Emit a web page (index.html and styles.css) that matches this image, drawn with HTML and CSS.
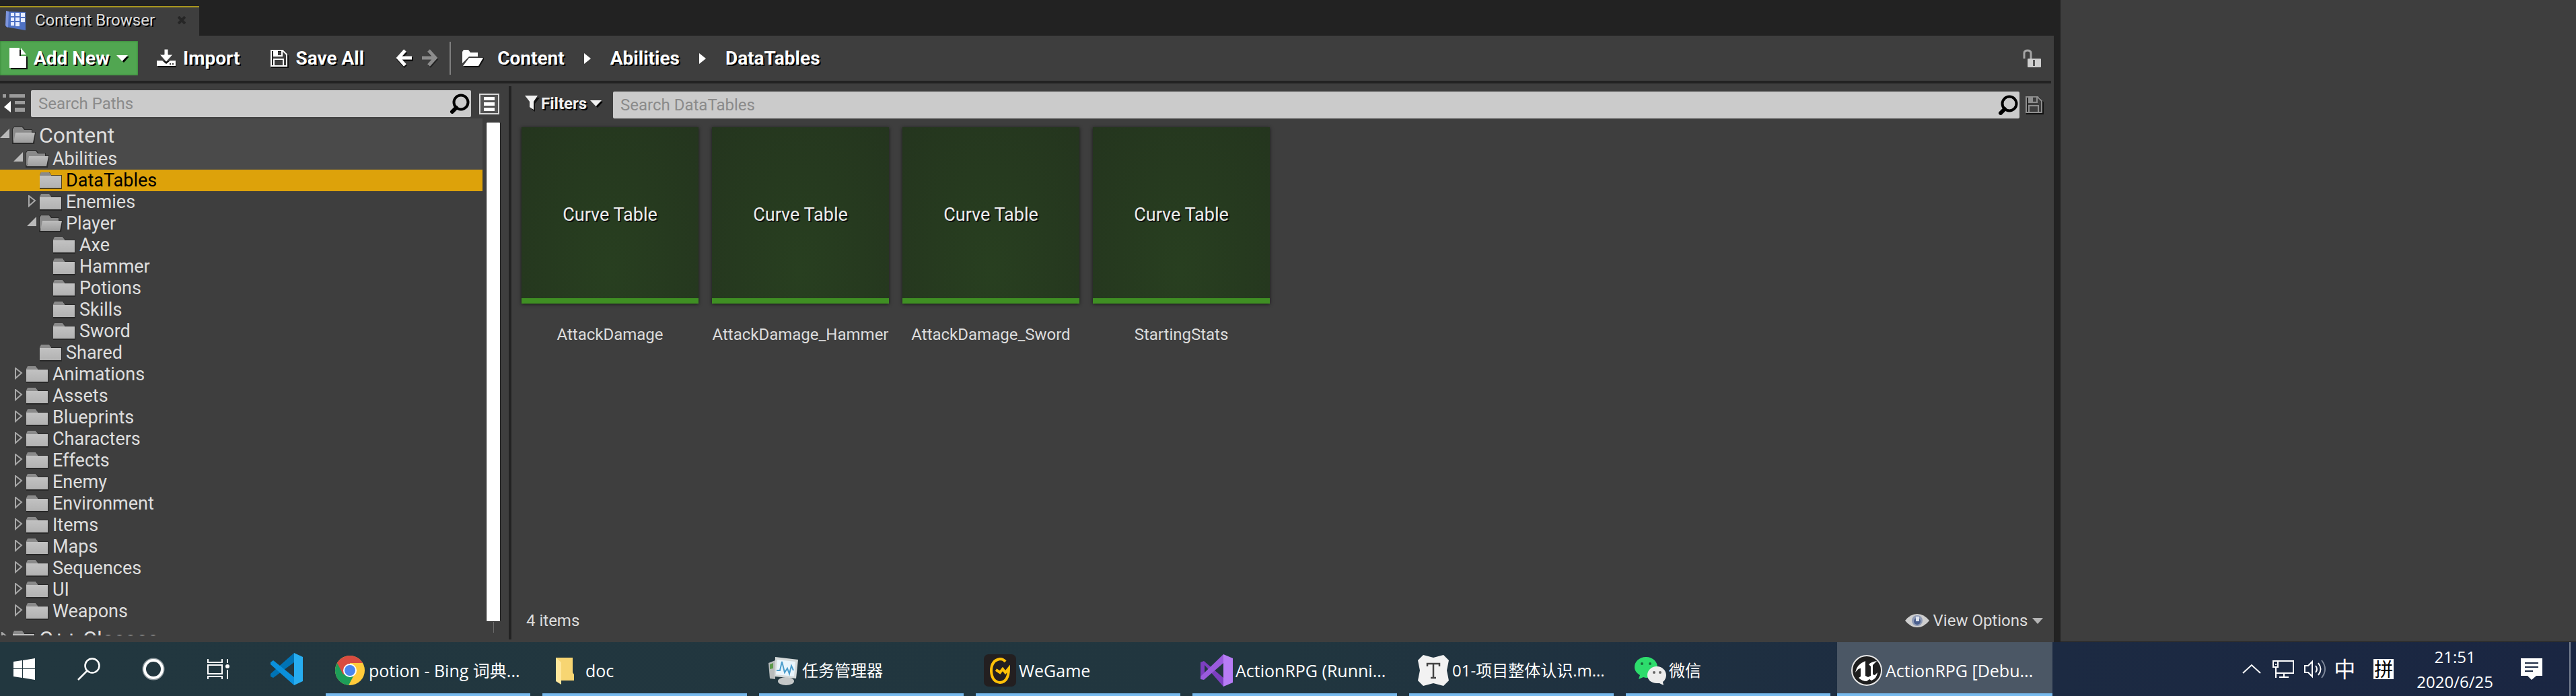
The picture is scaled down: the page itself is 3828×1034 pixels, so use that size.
FILE: index.html
```html
<!DOCTYPE html>
<html lang="en">
<head>
<meta charset="utf-8">
<title>Content Browser</title>
<link rel="stylesheet" href="styles.css">
</head>
<body>
<svg class="defs" aria-hidden="true">
  <defs>
    <linearGradient id="g-folder" x1="0" y1="0" x2="0" y2="1"><stop offset="0" stop-color="#c2c2c2"/><stop offset="1" stop-color="#b2b2b2"/></linearGradient>
    <linearGradient id="g-open" x1="0" y1="0" x2="0" y2="1"><stop offset="0" stop-color="#bdbdbd"/><stop offset="1" stop-color="#9d9d9d"/></linearGradient>
  </defs>
  <symbol id="folder" viewBox="0 0 36 28"><path d="M1 27V6l2-4h13l2 4h16v21z" fill="#222" opacity=".75"/><path d="M1 6l2-4h12l3 4v3H1z" fill="#8a8a8a"/><path d="M1 7h32v18H1z" fill="url(#g-folder)"/></symbol>
  <symbol id="folder-open" viewBox="0 0 36 28"><path d="M0 27V4l3-3h13l3 4h11v4h5l-2 18z" fill="#222" opacity=".75"/><path d="M1 25V5l2-3h12l3 4h11v4H8z" fill="#8a8a8a"/><path d="M5 10h29l-3 15H2z" fill="url(#g-open)"/></symbol>
  <symbol id="tri-open" viewBox="0 0 18 20"><path d="M0 14L14 0v14z" fill="#b9b9b9"/></symbol>
  <symbol id="tri-closed" viewBox="0 0 18 20"><path d="M3 1v15l9-8z" fill="none" stroke="#a8a8a8" stroke-width="2"/></symbol>
  <symbol id="glass" viewBox="0 0 30 30"><circle cx="17" cy="13" r="10.500" fill="none" stroke="#000" stroke-width="4"/><path d="M10 21l-6 6" stroke="#000" stroke-width="6" stroke-linecap="round"/></symbol>
  <symbol id="caret" viewBox="0 0 20 12"><path d="M3 3h17l-8 9z" fill="#000"/><path d="M1 1h17l-8.500 9z" fill="currentColor"/></symbol>
  <symbol id="floppy" viewBox="0 0 28 28"><path d="M3 3h18l6 7v17H3z" fill="none" stroke="#111" stroke-width="2"/><path d="M2 2h17l6 6v17H2zM6 2v8h12V2M6 25V15h14v10" fill="none" stroke="currentColor" stroke-width="2"/><path d="M7 3h5v6H7z" fill="currentColor"/></symbol>
  <symbol id="crumb" viewBox="0 0 12 18"><path d="M1 1l10 8-10 8z" fill="#fff"/></symbol>
</svg>

<div class="desktop">
  <main class="window">
    <div class="titlebar">
      <div class="tab">
        <svg class="tab-icon" viewBox="0 0 32 30"><path d="M2 2l28 1v27L1 25z" fill="#4f72c4"/><path d="M1 1l4 1-1 24-4-3z" fill="#7d95dc"/><path d="M8 4h5v5H8zM15 4h6v5h-6zM23 4h6v6h-6zM8 11h5v5H8zM15 11h6v5h-6zM23 12h6v6h-6zM8 18h5v5H8zM15 18h6v6h-6z" fill="#e6ecff"/></svg>
        <span class="tab-name">Content Browser</span>
        <button class="tab-close" aria-label="Close tab"><svg viewBox="0 0 12 12"><path d="M1 1l10 10M11 1L1 11" stroke="#262626" stroke-width="4"/></svg></button>
      </div>
    </div>

    <div class="toolbar">
      <button class="add-new">
        <svg width="28" height="32" viewBox="0 0 28 32"><path d="M3 3h15v10h10v19H3z" fill="#111"/><path d="M1 0h15v12h10v18H1z" fill="#fff"/><path d="M18 0l8 10h-8z" fill="#fff"/></svg>
        <span>Add New</span>
        <svg width="20" height="12"><use href="#caret"/></svg>
      </button>
      <button class="tool import">
        <svg width="29" height="27" viewBox="0 0 29 27"><path d="M2 18h27v9H2z" fill="#111"/><path d="M0 17h8l6 5 6-5h8v8H0z" fill="#fff"/><path d="M11 0h6v8h7L14 19 4 8h7z" fill="#fff" stroke="#3e3e3e" stroke-width="1"/><path d="M19 21h2v2h-2zM23 21h2v2h-2z" fill="#333"/></svg>
        <span>Import</span>
      </button>
      <button class="tool save-all"><svg width="28" height="28"><use href="#floppy"/></svg><span>Save All</span></button>
      <div class="history">
        <button aria-label="Back"><svg width="26" height="28" viewBox="0 0 26 28"><path d="M15 4L5 15l10 11M7 15h19" fill="none" stroke="#111" stroke-width="6"/><path d="M14 2L4 13l10 11M5 13h19" fill="none" stroke="#fff" stroke-width="5"/></svg></button>
        <button aria-label="Forward" disabled><svg width="26" height="28" viewBox="0 0 26 28"><path d="M12 4l10 11-10 11" fill="none" stroke="#222" stroke-width="5"/><path d="M11 2l10 11-10 11M1 13h19" fill="none" stroke="#8c8c8c" stroke-width="5"/></svg></button>
      </div>
      <span class="divider"></span>
      <nav class="crumbs" aria-label="Path">
        <svg class="crumb-folder" width="32" height="26" viewBox="0 0 32 26"><path d="M3 25h21l8-13" fill="none" stroke="#111" stroke-width="3"/><path d="M0 20V3l2-3h7l3 4h11v6H10z" fill="#fff"/><path d="M10 12h21l-7 12H1z" fill="#fff"/></svg>
        <a href="#content">Content</a>
        <svg width="12" height="18"><use href="#crumb"/></svg>
        <a href="#abilities">Abilities</a>
        <svg width="12" height="18"><use href="#crumb"/></svg>
        <a href="#datatables">DataTables</a>
      </nav>
      <button class="lock" aria-label="Lock"><svg width="28" height="28" viewBox="0 0 28 28"><path d="M2 14V6q0-4 5-4t5 4v9" fill="none" stroke="#a4a4a4" stroke-width="3"/><rect x="7" y="14" width="20" height="13" rx="1" fill="#cfcfcf"/><path d="M15 16h3v9h-3z" fill="#555"/></svg></button>
    </div>

    <div class="panes">
      <aside class="sources">
        <div class="sources-head">
          <button class="icon-btn" aria-label="Hide sources"><svg width="34" height="30" viewBox="0 0 34 30"><path d="M0 1h5v5H0zM10 1h23v5H10zM18 11h15v5H18zM18 21h15v6H18z" fill="#9b9b9b"/><path d="M12 11v17L2 20z" fill="#fff"/></svg></button>
          <label class="search"><input type="text" placeholder="Search Paths" aria-label="Search Paths"><svg width="30" height="30"><use href="#glass"/></svg></label>
          <button class="icon-btn" aria-label="Collections"><svg width="30" height="31" viewBox="0 0 30 31"><path d="M1 1h28v29H1z" fill="#555" stroke="#d8d8d8" stroke-width="2"/><path d="M7 5h16v5H7zM7 13h16v5H7zM7 21h16v5H7z" fill="#fff"/></svg></button>
        </div>
        <div class="tree-wrap">
          <ul class="tree">
            <li><button class="row root parent"><svg class="tw"><use href="#tri-open"/></svg><svg class="fd"><use href="#folder-open"/></svg>Content</button></li>
            <li><button class="row l1 parent"><svg class="tw"><use href="#tri-open"/></svg><svg class="fd"><use href="#folder-open"/></svg>Abilities</button></li>
            <li><button class="row l2 selected"><svg class="tw"></svg><svg class="fd"><use href="#folder"/></svg>DataTables</button></li>
            <li><button class="row l2"><svg class="tw"><use href="#tri-closed"/></svg><svg class="fd"><use href="#folder"/></svg>Enemies</button></li>
            <li><button class="row l2"><svg class="tw"><use href="#tri-open"/></svg><svg class="fd"><use href="#folder-open"/></svg>Player</button></li>
            <li><button class="row l3"><svg class="tw"></svg><svg class="fd"><use href="#folder"/></svg>Axe</button></li>
            <li><button class="row l3"><svg class="tw"></svg><svg class="fd"><use href="#folder"/></svg>Hammer</button></li>
            <li><button class="row l3"><svg class="tw"></svg><svg class="fd"><use href="#folder"/></svg>Potions</button></li>
            <li><button class="row l3"><svg class="tw"></svg><svg class="fd"><use href="#folder"/></svg>Skills</button></li>
            <li><button class="row l3"><svg class="tw"></svg><svg class="fd"><use href="#folder"/></svg>Sword</button></li>
            <li><button class="row l2"><svg class="tw"></svg><svg class="fd"><use href="#folder"/></svg>Shared</button></li>
            <li><button class="row l1"><svg class="tw"><use href="#tri-closed"/></svg><svg class="fd"><use href="#folder"/></svg>Animations</button></li>
            <li><button class="row l1"><svg class="tw"><use href="#tri-closed"/></svg><svg class="fd"><use href="#folder"/></svg>Assets</button></li>
            <li><button class="row l1"><svg class="tw"><use href="#tri-closed"/></svg><svg class="fd"><use href="#folder"/></svg>Blueprints</button></li>
            <li><button class="row l1"><svg class="tw"><use href="#tri-closed"/></svg><svg class="fd"><use href="#folder"/></svg>Characters</button></li>
            <li><button class="row l1"><svg class="tw"><use href="#tri-closed"/></svg><svg class="fd"><use href="#folder"/></svg>Effects</button></li>
            <li><button class="row l1"><svg class="tw"><use href="#tri-closed"/></svg><svg class="fd"><use href="#folder"/></svg>Enemy</button></li>
            <li><button class="row l1"><svg class="tw"><use href="#tri-closed"/></svg><svg class="fd"><use href="#folder"/></svg>Environment</button></li>
            <li><button class="row l1"><svg class="tw"><use href="#tri-closed"/></svg><svg class="fd"><use href="#folder"/></svg>Items</button></li>
            <li><button class="row l1"><svg class="tw"><use href="#tri-closed"/></svg><svg class="fd"><use href="#folder"/></svg>Maps</button></li>
            <li><button class="row l1"><svg class="tw"><use href="#tri-closed"/></svg><svg class="fd"><use href="#folder"/></svg>Sequences</button></li>
            <li><button class="row l1"><svg class="tw"><use href="#tri-closed"/></svg><svg class="fd"><use href="#folder"/></svg>UI</button></li>
            <li><button class="row l1"><svg class="tw"><use href="#tri-closed"/></svg><svg class="fd"><use href="#folder"/></svg>Weapons</button></li>
            <li><button class="row root"><svg class="tw"><use href="#tri-closed"/></svg><svg class="fd"><use href="#folder"/></svg>C++ Classes</button></li>
          </ul>
          <div class="scrollbar"><span class="thumb"></span><span class="track"></span></div>
        </div>
      </aside>

      <section class="assets">
        <div class="assets-head">
          <button class="filters"><svg width="22" height="24" viewBox="0 0 22 24"><path d="M2 3h20l-7 9v12l-5-4v-8z" fill="#111"/><path d="M0 0h19l-6 9v12l-6-4V9z" fill="#f0f0f0"/></svg><span>Filters</span><svg width="20" height="12"><use href="#caret"/></svg></button>
          <label class="search"><input type="text" placeholder="Search DataTables" aria-label="Search DataTables"><svg width="30" height="30"><use href="#glass"/></svg></label>
          <button class="save-search" aria-label="Save search"><svg width="28" height="28"><use href="#floppy"/></svg></button>
        </div>
        <div class="tiles">
          <figure class="tile"><div class="thumb-card">Curve Table</div><figcaption>AttackDamage</figcaption></figure>
          <figure class="tile"><div class="thumb-card">Curve Table</div><figcaption>AttackDamage_Hammer</figcaption></figure>
          <figure class="tile"><div class="thumb-card">Curve Table</div><figcaption>AttackDamage_Sword</figcaption></figure>
          <figure class="tile"><div class="thumb-card">Curve Table</div><figcaption>StartingStats</figcaption></figure>
        </div>
        <div class="assets-foot">
          <span>4 items</span>
          <button class="view-options"><svg width="36" height="22" viewBox="0 0 36 22"><path d="M0 11Q8 1 18 1t18 10q-8 10-18 10T0 11z" fill="#cfcfcf"/><circle cx="18" cy="11" r="8" fill="#8e9ab5"/><circle cx="18" cy="12" r="5" fill="#4a5f8e"/><path d="M16 5h5v7h-5z" fill="#dfe4ee"/></svg><span>View Options</span><svg width="18" height="11" viewBox="0 0 18 11"><path d="M1 1h16l-8 9z" fill="#b4b4b4"/></svg></button>
        </div>
      </section>
    </div>
  </main>
  <div class="beside"></div>
</div>

<footer class="taskbar">
  <div class="pinned">
    <button class="start" aria-label="Start"><svg width="34" height="34" viewBox="0 0 34 34"><path d="M1 6l13-2v12H1zM15 4l18-3v15H15zM1 17h13v13L1 28zM15 17h18v16l-18-3z" fill="#fff"/></svg></button>
    <button aria-label="Search"><svg width="34" height="34" viewBox="0 0 34 34"><circle cx="22" cy="12" r="10.500" fill="none" stroke="#fff" stroke-width="2.500"/><path d="M14 20L1 33" stroke="#fff" stroke-width="2.500"/></svg></button>
    <button aria-label="Cortana"><svg width="34" height="34" viewBox="0 0 34 34"><circle cx="17" cy="17" r="14.500" fill="none" stroke="#8f9a9f" stroke-width="4"/><circle cx="17" cy="17" r="13" fill="none" stroke="#fff" stroke-width="4"/></svg></button>
    <button aria-label="Task View"><svg width="34" height="34" viewBox="0 0 34 34"><path d="M2 2v5h21V2M2 11h21v13H2zM2 32v-4h21v4M31 2v6M31 18v14" fill="none" stroke="#fff" stroke-width="2"/><circle cx="31" cy="13" r="3" fill="#fff"/></svg></button>
    <button class="code" aria-label="Visual Studio Code"><svg width="50" height="48" viewBox="0 0 50 48"><path d="M36 0L1 31v4l4 2L36 14z" fill="#0073b5"/><path d="M5 11l-4 3v3l35 31V36z" fill="#0a90dc"/><path d="M36 0l13 6v36l-13 6z" fill="#27adf0"/></svg></button>
  </div>
  <div class="tasks">
    <button class="task"><svg viewBox="0 0 48 48"><circle cx="24" cy="24" r="22" fill="#ffca3a"/><path d="M24 24L5 13A22 22 0 0 0 22 46l8-15z" fill="#1d9d58"/><path d="M5 13a22 22 0 0 1 38 0H24v11l-10 6z" fill="#d94c40"/><circle cx="24" cy="24" r="10" fill="#fff"/><circle cx="24" cy="24" r="8" fill="#4a86ee"/></svg><span>potion - Bing 词典...</span></button>
    <button class="task"><svg viewBox="0 0 48 48"><path d="M8 5h25v22l2 3v9H8z" fill="#f7d572"/><path d="M8 5l8 7v33l-8-5z" fill="#ffe79c"/></svg><span>doc</span></button>
    <button class="task" lang="zh"><svg viewBox="0 0 48 48"><path d="M2 13l10-4v28l-8-1z" fill="#b8bcbc"/><path d="M4 15l5-2v8l-5 1z" fill="#5d9a4b"/><ellipse cx="28" cy="40" rx="12" ry="6" fill="#c4c7c7"/><path d="M12 4l34 4-3 28-32-3z" fill="#d5dada"/><path d="M15 8l27 3-2 22-27-3z" fill="#e9f5fc"/><path d="M14 24h5l3-13 4 16 4-6 3 8 3-12 3 7" fill="none" stroke="#4b9dcc" stroke-width="2"/></svg><span>任务管理器</span></button>
    <button class="task"><svg viewBox="0 0 48 48"><rect width="48" height="48" rx="7" fill="#231f20"/><path d="M32 11Q29 7 24 7 11 9 11 25q1 16 13 17 13-1 13-21l-5 6-4-5-4 5-6-4" fill="none" stroke="#ffc107" stroke-width="4"/></svg><span>WeGame</span></button>
    <button class="task"><svg viewBox="0 0 48 48"><path d="M0 12l5-2 29 25v13L6 16v16l-6 5z" fill="#7c3fc0"/><path d="M34 0v13L5 38l-5-1v-4z" fill="#9a5bdd"/><path d="M34 0l14 6v36l-14 6z" fill="#b77cf5"/></svg><span>ActionRPG (Runni...</span></button>
    <button class="task" lang="zh"><svg viewBox="0 0 48 48"><path d="M9 1l15 4 15-4 8 8-3 15 3 15-8 8-15-4-15 4-8-8 3-15L1 9z" fill="#f2f2f2"/><path d="M15 18v-4h18v4M24 14v21M20 35h8" fill="none" stroke="#444" stroke-width="2.500"/></svg><span>01-项目整体认识.m...</span></button>
    <button class="task" lang="zh"><svg viewBox="0 0 48 48"><path d="M18 4c10 0 17 7 17 15S28 35 18 35l-4-1-7 3 2-6C4 28 1 24 1 19 1 11 8 4 18 4z" fill="#2ddc6c"/><circle cx="12" cy="14" r="2" fill="#176b39"/><circle cx="24" cy="14" r="2" fill="#176b39"/><path d="M34 18c8 0 14 6 14 13 0 4-2 8-5 10l1 5-6-3h-4c-8 0-14-5-14-12s6-13 14-13z" fill="#ececec"/><circle cx="30" cy="27" r="2" fill="#666"/><circle cx="39" cy="27" r="2" fill="#666"/></svg><span>微信</span></button>
    <button class="task active"><svg viewBox="0 0 48 48"><circle cx="24" cy="24" r="22" fill="#1e1e1e" stroke="#e8e8e8" stroke-width="2"/><path d="M22 10Q9 15 7 27q5-7 8-6v12l-3 2q5 5 12 5l4-3 3 2q8-3 9-12l-4 4-3-1V16l6-6q-8 1-12 5l3 3v14l-4 2-4-2V14z" fill="#fff"/></svg><span>ActionRPG [Debu...</span></button>
  </div>
  <div class="tray">
    <button class="t-chevron" aria-label="Show hidden icons"><svg width="28" height="16" viewBox="0 0 28 16"><path d="M1 14L14 2l13 12" fill="none" stroke="#fff" stroke-width="2"/></svg></button>
    <button class="t-net" aria-label="Network"><svg width="32" height="28" viewBox="0 0 32 28"><path d="M8 2h23v18H5M1 2h7v9H1zM5 11v16M17 20v6M10 26h14" fill="none" stroke="#fff" stroke-width="2"/><path d="M4 6h2v2H4z" fill="#fff"/></svg></button>
    <button class="t-vol" aria-label="Volume"><svg width="34" height="28" viewBox="0 0 34 28"><path d="M1 9h5l6-6v22l-6-6H1z" fill="none" stroke="#fff" stroke-width="2"/><path d="M17 9q4 5 0 10M21 5q7 9 0 18" fill="none" stroke="#fff" stroke-width="2"/><path d="M26 1q10 13 0 26" fill="none" stroke="#7d8799" stroke-width="2"/></svg></button>
    <button class="t-lang" lang="zh">中</button>
    <button class="t-ime" lang="zh">拼</button>
    <button class="t-clock"><span>21:51</span><span>2020/6/25</span></button>
    <button class="t-notes" aria-label="Notifications"><svg width="32" height="32" viewBox="0 0 32 32"><path d="M0 0h32v26h-9l-7 6-6-6H0z" fill="#fff"/><path d="M6 7h20M6 13h20M6 19h12" stroke="#1b2942" stroke-width="2"/></svg></button>
    <button class="t-desk" aria-label="Show desktop"></button>
  </div>
</footer>
</body>
</html>
```

FILE: styles.css
```css
* { box-sizing: border-box; }

body {
  margin: 0;
  height: 100vh;
  display: flex;
  flex-direction: column;
  overflow: hidden;
  background: #3e3e3e;
  color: #dcdcdc;
  font: 24px/32px Roboto, "Liberation Sans", sans-serif;
}

button {
  display: flex;
  align-items: center;
  margin: 0;
  padding: 0;
  border: 0;
  background: none;
  color: inherit;
  font: inherit;
  text-shadow: inherit;
  white-space: nowrap;
}

svg { display: block; flex: none; }
.defs { position: absolute; width: 0; height: 0; }

.desktop { display: flex; flex: 1; min-height: 0; }
.beside { flex: 1; border-bottom: 1px solid #222; }

/* Editor window */
.window {
  display: flex;
  flex-direction: column;
  width: 80%;
  border-right: 10px solid #222;
}

.titlebar { height: 53px; padding-top: 9px; background: #222; }
.tab {
  display: flex;
  align-items: center;
  width: 296px;
  height: 44px;
  padding: 0 20px 4px 8px;
  border-top: 2px solid #a8961e;
  background: #3e3e3e;
  text-shadow: 2px 2px #000;
}
.tab-icon { width: 32px; height: 30px; }
.tab-name { flex: 1; padding-left: 12px; }
.tab-close svg { width: 12px; height: 12px; }

.toolbar {
  display: flex;
  align-items: center;
  height: 71px;
  margin-right: 4px;
  border-bottom: 4px solid #222;
  color: #fff;
  font-size: 28px;
  font-weight: 700;
  text-shadow: 2px 2px #000;
}
.add-new {
  width: 205px;
  height: 51px;
  padding-left: 13px;
  gap: 9px;
  background: #51a651;
  box-shadow: inset 0 0 3px #2f7a2f;
}
.tool { gap: 10px; }
.import { margin-left: 28px; }
.save-all { margin-left: 45px; }
.history { display: flex; gap: 12px; margin-left: 47px; }
.divider { width: 2px; height: 49px; margin-left: 16px; background: #808080; }
.crumbs { display: flex; align-items: center; gap: 28px; margin-left: 17px; }
.crumb-folder { margin-right: -8px; }
.crumbs a { color: inherit; text-decoration: none; }
.lock { margin: 0 14px 0 auto; }

.panes { display: flex; flex: 1; min-height: 0; }

.search {
  display: flex;
  align-items: center;
  flex: 1;
  height: 40px;
  padding-right: 2px;
  border-radius: 2px;
  background: #cbcbcb;
}
.search input {
  flex: 1;
  min-width: 0;
  height: 100%;
  padding: 0 11px;
  border: 0;
  background: none;
  color: #222;
  font: inherit;
}
.search input::placeholder { color: #8a8a8a; opacity: 1; }

/* Sources panel */
.sources {
  display: flex;
  flex-direction: column;
  flex: none;
  width: 760px;
  margin: 4px 0;
  border-right: 4px solid #222;
}
.sources-head {
  display: flex;
  align-items: center;
  gap: 12px;
  height: 48px;
  padding: 4px 14px 0 4px;
}
.sources-head .search { margin-left: -4px; }

.tree-wrap { display: flex; flex: 1; min-height: 0; padding-bottom: 6px; }
.tree {
  flex: 1;
  margin: 0;
  padding: 0;
  overflow: hidden;
  list-style: none;
  color: #dedede;
  font-size: 27px;
}
.row { width: 100%; height: 32px; }
.row .tw { width: 18px; height: 20px; }
.row .fd { width: 36px; height: 28px; margin-right: 4px; }
.root { height: 44px; padding: 6px 0 0; font-size: 32px; }
.parent { background: #4a4a4a; }
.l1 { padding-left: 20px; }
.l2 { padding-left: 40px; }
.l3 { padding-left: 60px; }
.selected { background: #dda20a; color: #000; }

.scrollbar {
  display: flex;
  flex-direction: column;
  align-items: center;
  width: 22px;
  margin: 5px 12px 4px 5px;
}
.thumb { flex: 1; width: 100%; border: 1px solid #222; border-radius: 2px; background: #fff; }
.track { width: 1px; height: 16px; background: #6a6a6a; }

/* Asset panel */
.assets { display: flex; flex-direction: column; flex: 1; padding: 12px 15px 16px; }
.assets-head { display: flex; align-items: center; }
.filters {
  gap: 4px;
  width: 131px;
  margin-left: 5px;
  padding-bottom: 4px;
  color: #f0f0f0;
  font-weight: 700;
  text-shadow: 2px 2px #000;
}
.filters span { margin-left: -2px; }
.save-search { margin-left: 8px; color: #8e8e8e; }
.tiles { display: flex; flex-wrap: wrap; gap: 20px; flex: 1; align-content: flex-start; padding-top: 13px; }
.tile { width: 263px; margin: 0; text-align: center; }
.thumb-card {
  display: flex;
  align-items: center;
  justify-content: center;
  height: 262px;
  padding-top: 6px;
  border-bottom: 8px solid #3f8f23;
  background: radial-gradient(ellipse at 50% 85%, #283f20, #24351e);
  box-shadow: 0 1px 5px #181818;
  color: #ececec;
  font-size: 27px;
  text-shadow: 2px 2px #111;
}
.tile figcaption { padding-top: 30px; }
.assets-foot { display: flex; justify-content: space-between; padding-left: 7px; }
.view-options { gap: 6px; }

/* Taskbar */
.taskbar {
  display: flex;
  flex: none;
  height: 80px;
  background: linear-gradient(90deg, #22373f, #21363f 50%, #1c2a42 80%, #1a2642);
  color: #fff;
  font-family: "Open Sans", "Noto Sans CJK SC", sans-serif;
}
.pinned, .tasks, .tray { display: flex; }
.pinned button { justify-content: center; width: 96px; }
.pinned .start { width: 84px; padding-right: 12px; }
.pinned .code { width: 104px; padding-left: 4px; }
.tasks { flex: 1; gap: 2px; min-width: 0; }
.task {
  gap: 4px;
  width: 320px;
  padding: 4px 20px 0;
  background: linear-gradient(#76b9ed, #76b9ed) 50% 100% / 304px 4px no-repeat;
  font-size: 25px;
}
.task:lang(zh) { font-size: 24px; }
.task svg { width: 48px; height: 48px; }
.task.active { background-color: #4b5765; background-size: 100% 4px; }
.tray { align-items: center; }
.t-net { margin-left: 17px; }
.t-vol { margin-left: 15px; }
.t-lang { margin-left: 10px; font-size: 32px; }
.t-ime {
  justify-content: center;
  width: 30px;
  height: 30px;
  margin-left: 27px;
  background: #fff;
  color: #000;
  font-size: 28px;
}
.t-clock { flex-direction: column; margin-left: 34px; line-height: 37px; }
.t-notes { margin: 0 40px 0 41px; }
.t-desk { width: 10px; height: 80px; border-left: 2px solid #7a8292; }
```
